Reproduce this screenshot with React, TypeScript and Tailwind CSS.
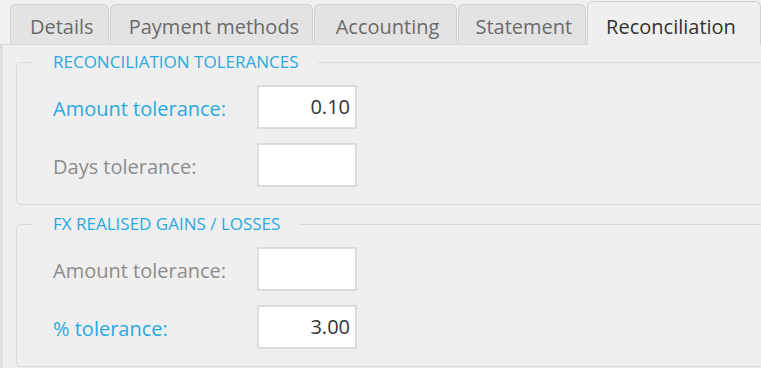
import React from 'react';

const tabs = [
  { label: 'Details', w: 'w-[100px]' },
  { label: 'Payment methods', w: 'w-[204px]' },
  { label: 'Accounting', w: 'w-[143px]' },
  { label: 'Statement', w: 'w-[129px]' },
];

function Field({ label, value, accent }: { label: string; value?: string; accent?: boolean }) {
  return (
    <div className="flex items-center">
      <span className={`w-[204px] pt-[3px] text-[20px] leading-[26px] ${accent ? 'text-[#2aa9e0]' : 'text-[#8c8c8c]'}`}>{label}</span>
      <div className="flex h-[44px] w-[100px] items-center justify-end border-2 border-[#dcdcdc] bg-white pr-[5px] text-[20px] text-[#333]">
        {value}
      </div>
    </div>
  );
}

function Group({ title, children, className }: { title: string; children: React.ReactNode; className?: string }) {
  return (
    <fieldset className={`ml-[13px] w-[800px] rounded-[5px] border border-[#dadada] pb-[17px] ${className ?? ''}`}>
      <legend className="ml-[16px] px-[20px] text-[17px] leading-[20px] text-[#2aa9e0]">{title}</legend>
      <div className="mt-[13px] flex flex-col gap-[14px] pl-[36px]">{children}</div>
    </fieldset>
  );
}

export default function App() {
  return (
    <div className="h-[368px] w-[761px] overflow-hidden bg-[#f0f0f0] font-['Open_Sans',sans-serif]">
      {/* Tab strip */}
      <div className="flex h-[45px] items-end gap-px border-b border-[#d9d9d9] pl-[10px]">
        {tabs.map((t) => (
          <div
            key={t.label}
            className={`${t.w} flex h-[40px] items-center justify-center rounded-t-[6px] border border-b-0 border-[#d2d2d2] bg-[#e3e3e3] pl-[4px] pt-[5px] text-[20px] text-[#6b6b6b]`}
          >
            {t.label}
          </div>
        ))}
        <div className="-mb-px flex h-[44px] w-[175px] items-center justify-center rounded-t-[6px] border border-b-0 border-[#d2d2d2] bg-[#efefef] pr-[6px] pt-[7px] text-[20px] text-[#333]">
          Reconciliation
        </div>
      </div>

      {/* Content */}
      <div className="h-[323px] border-l-[3px] border-[#e0e0e0] bg-[#efefef] pt-[7px]">
        <Group title="RECONCILIATION TOLERANCES">
          <Field label="Amount tolerance:" value="0.10" accent />
          <Field label="Days tolerance:" />
        </Group>
        <Group title="FX REALISED GAINS / LOSSES" className="mt-[9px]">
          <Field label="Amount tolerance:" />
          <Field label="% tolerance:" value="3.00" accent />
        </Group>
      </div>
    </div>
  );
}
